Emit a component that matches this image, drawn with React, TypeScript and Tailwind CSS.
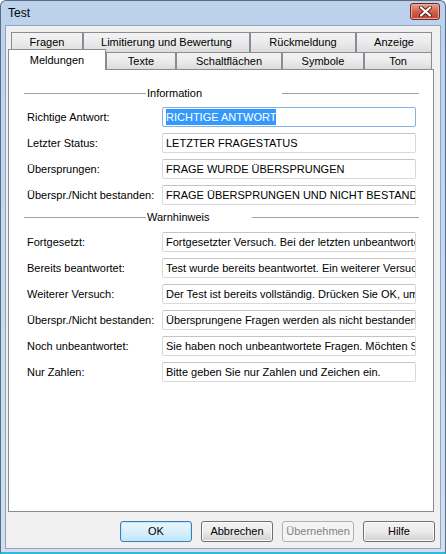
import React from 'react';

const infoRows = [
  { label: 'Richtige Antwort:', value: 'RICHTIGE ANTWORT', selected: true },
  { label: 'Letzter Status:', value: 'LETZTER FRAGESTATUS' },
  { label: 'Übersprungen:', value: 'FRAGE WURDE ÜBERSPRUNGEN' },
  { label: 'Überspr./Nicht bestanden:', value: 'FRAGE ÜBERSPRUNGEN UND NICHT BESTANDEN' },
];

const warnRows = [
  { label: 'Fortgesetzt:', value: 'Fortgesetzter Versuch. Bei der letzten unbeantworteten Frage fortfahren?' },
  { label: 'Bereits beantwortet:', value: 'Test wurde bereits beantwortet. Ein weiterer Versuch ist nicht möglich.' },
  { label: 'Weiterer Versuch:', value: 'Der Test ist bereits vollständig. Drücken Sie OK, um abzuschließen.' },
  { label: 'Überspr./Nicht bestanden:', value: 'Übersprungene Fragen werden als nicht bestanden bewertet.' },
  { label: 'Noch unbeantwortet:', value: 'Sie haben noch unbeantwortete Fragen. Möchten Sie fortfahren?' },
  { label: 'Nur Zahlen:', value: 'Bitte geben Sie nur Zahlen und Zeichen ein.' },
];

const topTabs = [
  { label: 'Fragen', w: 'w-[72px]' },
  { label: 'Limitierung und Bewertung', w: 'w-[167px]' },
  { label: 'Rückmeldung', w: 'w-[106px]' },
  { label: 'Anzeige', w: 'w-[76px]' },
];

const bottomTabs = [
  { label: 'Texte', w: 'w-[70px]' },
  { label: 'Schaltflächen', w: 'w-[106px]' },
  { label: 'Symbole', w: 'w-[82px]' },
  { label: 'Ton', w: 'w-[68px]' },
];

function Tab({ label, w }: { label: string; w: string }) {
  return (
    <div
      className={`${w} flex items-center justify-center border border-b-0 border-[#898c95] bg-linear-to-b from-[#f3f3f3] via-[#ebebeb] to-[#dcdcdc]`}
    >
      {label}
    </div>
  );
}

function Separator({ title, rightWidth }: { title: string; rightWidth: string }) {
  return (
    <div className="flex h-[14px] items-center pl-[15px] pr-[14px]">
      <div className="h-px w-[122px] bg-[#a0a0a0]" />
      <span className="ml-[1px] leading-none">{title}</span>
      <div className="flex-1" />
      <div className={`h-px ${rightWidth} bg-[#a0a0a0]`} />
    </div>
  );
}

function Field({ label, value, selected }: { label: string; value: string; selected?: boolean }) {
  return (
    <div className="flex items-center pl-[18px]">
      <div className="w-[135px] whitespace-nowrap">{label}</div>
      <div
        className={`flex h-[20px] w-[254px] items-center overflow-hidden whitespace-nowrap rounded-[2px] border bg-white pl-[3px] ${
          selected ? 'border-[#7fb3e3]' : 'border-[#d9d9d9] border-t-[#c4c4c4]'
        }`}
      >
        {selected ? <span className="bg-[#3399ff] text-white">{value}</span> : value}
      </div>
    </div>
  );
}

function DialogButton({ label, primary, disabled }: { label: string; primary?: boolean; disabled?: boolean }) {
  const look = primary
    ? 'border-[#3c7fb1] bg-linear-to-b from-[#eaf6fd] via-[#d9f0fc] to-[#bee6fd] shadow-[inset_0_0_0_1px_#bfe7fb]'
    : disabled
      ? 'border-[#adb2b5] bg-[#f4f4f4] text-[#838383]'
      : 'border-[#707070] bg-linear-to-b from-[#f2f2f2] via-[#ebebeb] to-[#cfcfcf] shadow-[inset_0_0_0_1px_#fcfcfc]';
  return (
    <div className={`flex h-[21px] w-[72px] items-center justify-center rounded-[3px] border ${look}`}>
      {label}
    </div>
  );
}

export default function App() {
  return (
    <div className="flex h-[554px] w-[446px] flex-col overflow-hidden rounded-t-[6px] border border-b-2 border-[#5b6b80] border-b-[#39b3d9] bg-linear-to-b from-[#bcd2ec] to-[#cfe0f3] font-['Liberation_Sans',Arial,sans-serif] text-[11px] text-black">
      <div className="flex h-[24px] shrink-0 items-center pl-[7px] pr-[5px]">
        <span className="text-[12px]">Test</span>
        <div className="flex-1" />
        <div className="mt-[-3px] flex h-[17px] w-[30px] items-center justify-center rounded-[3px] border border-[#6b2a22] bg-linear-to-b from-[#e8a493] via-[#d0604e] to-[#c0402e] shadow-[inset_0_0_0_1px_#eaa79a]">
          <svg width="13" height="11" viewBox="0 0 13 11">
            <path
              d="M2 1.5 L11 9.5 M11 1.5 L2 9.5"
              stroke="#5a1f18"
              strokeWidth="4"
              strokeLinecap="round"
            />
            <path
              d="M2 1.5 L11 9.5 M11 1.5 L2 9.5"
              stroke="#ffffff"
              strokeWidth="2.2"
              strokeLinecap="round"
            />
          </svg>
        </div>
      </div>
      <div className="flex-1 px-[4px] pb-[3px]">
        <div className="flex h-full flex-col border border-[#8fa5bd] bg-[#f0f0f0] pl-[2px] pr-[4px] pt-[6px]">
          <div className="flex h-[20px] pl-[3px]">
            {topTabs.map((t) => (
              <Tab key={t.label} label={t.label} w={t.w} />
            ))}
          </div>
          <div className="flex h-[17px]">
            <div className="relative z-10 mt-[-3px] flex h-[21px] w-[98px] items-center justify-center border border-b-0 border-[#898c95] bg-white">
              Meldungen
            </div>
            {bottomTabs.map((t) => (
              <Tab key={t.label} label={t.label} w={t.w} />
            ))}
          </div>
          <div className="h-[443px] w-[426px] border border-[#898c95] bg-white">
            <div className="mt-[16px]">
              <Separator title="Information" rightWidth="w-[137px]" />
            </div>
            <div className="mt-[7px] flex flex-col gap-[6px]">
              {infoRows.map((r) => (
                <Field key={r.label} label={r.label} value={r.value} selected={r.selected} />
              ))}
            </div>
            <div className="mt-[5px]">
              <Separator title="Warnhinweis" rightWidth="w-[167px]" />
            </div>
            <div className="mt-[8px] flex flex-col gap-[6px]">
              {warnRows.map((r) => (
                <Field key={r.value} label={r.label} value={r.value} />
              ))}
            </div>
          </div>
          <div className="mt-[9px] flex w-[427px] justify-end gap-[9px]">
            <DialogButton label="OK" primary />
            <DialogButton label="Abbrechen" />
            <DialogButton label="Übernehmen" disabled />
            <DialogButton label="Hilfe" />
          </div>
        </div>
      </div>
    </div>
  );
}
